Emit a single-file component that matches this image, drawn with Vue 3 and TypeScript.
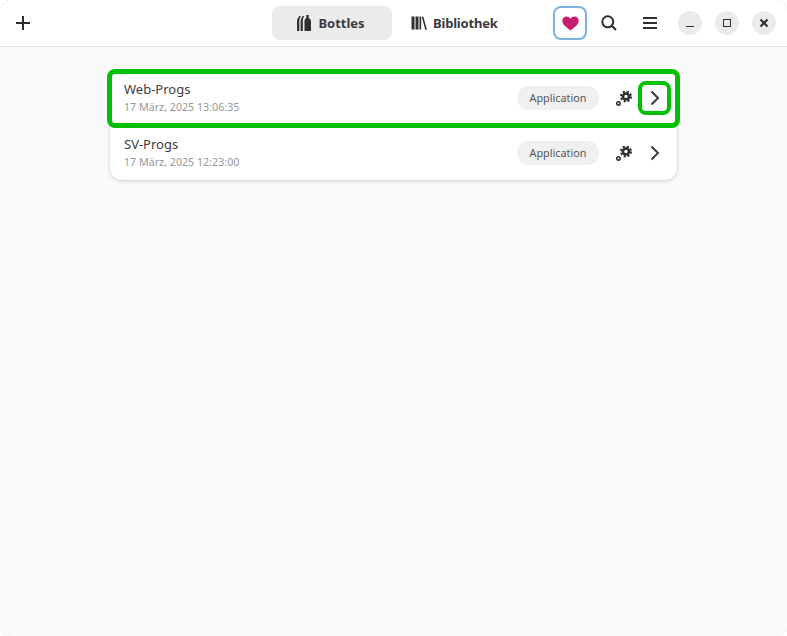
<script setup lang="ts">
interface Bottle {
  name: string;
  date: string;
  kind: string;
  marked: boolean;
}

const bottles: Bottle[] = [
  { name: 'Web-Progs', date: '17 März, 2025 13:06:35', kind: 'Application', marked: true },
  { name: 'SV-Progs', date: '17 März, 2025 12:23:00', kind: 'Application', marked: false },
];
</script>

<template>
  <div class="window">
    <header class="headerbar">
      <button class="icon-btn add" aria-label="Neu">
        <svg width="16" height="16" viewBox="0 0 16 16"><path d="M8 1v14M1 8h14" stroke="#2e2e33" stroke-width="2" fill="none" /></svg>
      </button>
      <nav class="tabs">
        <button class="tab active">
          <svg width="14" height="16" viewBox="0 0 14 16" fill="#2e2e33">
            <path d="M0 16V6.500C0 4 1.200 2.500 2.300 1h1.500C2.900 3 2.300 4.500 2.300 6.500V16z" />
            <path d="M3.600 16V6.500c0-2 1-3.800 2.200-5.500h1.300C6.200 3 5.800 4.500 5.800 6.500V16z" />
            <path d="M7.500 16V5.500c0-1 1-1.700 1.800-2.500V0h2.400v3c.8.800 2.300 1.500 2.300 2.500V16z" />
          </svg>
          <span>Bottles</span>
        </button>
        <button class="tab library">
          <svg width="16" height="14" viewBox="0 0 16 14" fill="#2e2e33">
            <path d="M0.500 0.500h3v13h-3zM4.500 0.500h3v13h-3zM8.500 0.500h1.700v13H8.500z" />
            <path d="M10.800 1l1.500-.5 3.600 13-1.500.5z" />
          </svg>
          <span>Bibliothek</span>
        </button>
      </nav>
      <div class="actions">
        <button class="icon-btn heart" aria-label="Spenden">
          <svg width="17" height="15" viewBox="0 0 17 15"><path d="M8.500 14.500C6 12.300.3 9.200.3 4.800.3 2.200 2.300.5 4.500.5c1.700 0 3.100.8 4 2.200.9-1.400 2.300-2.200 4-2.200 2.200 0 4.200 1.700 4.200 4.300 0 4.400-5.700 7.500-8.200 9.700z" fill="#c81e6e" /></svg>
        </button>
        <button class="icon-btn search" aria-label="Suchen">
          <svg width="16" height="16" viewBox="0 0 16 16" fill="none" stroke="#2e2e33" stroke-width="2"><circle cx="6.800" cy="6.800" r="5.500" /><path d="M10.800 10.800l4.200 4.200" /></svg>
        </button>
        <button class="icon-btn menu" aria-label="Menü">
          <svg width="16" height="14" viewBox="0 0 16 14" fill="#2e2e33"><path d="M1 1h14v2H1zM1 6h14v2H1zM1 11h14v2H1z" /></svg>
        </button>
        <div class="win-controls">
          <button class="win-btn" aria-label="Minimieren">
            <svg width="10" height="10" viewBox="0 0 10 10"><path d="M1 8.500h8" stroke="#2e2e33" stroke-width="1" /></svg>
          </button>
          <button class="win-btn" aria-label="Maximieren">
            <svg width="10" height="10" viewBox="0 0 10 10"><rect x="1.500" y="1.500" width="7" height="7" fill="none" stroke="#2e2e33" stroke-width="1" /></svg>
          </button>
          <button class="win-btn" aria-label="Schließen">
            <svg width="10" height="10" viewBox="0 0 10 10"><path d="M1.500 1.500l7 7M8.500 1.500l-7 7" stroke="#2e2e33" stroke-width="2" /></svg>
          </button>
        </div>
      </div>
    </header>

    <main class="content">
      <ul class="list">
        <li v-for="b in bottles" :key="b.name" class="row" :class="{ marked: b.marked }">
          <div class="labels">
            <span class="title">{{ b.name }}</span>
            <span class="date">{{ b.date }}</span>
          </div>
          <span class="pill">{{ b.kind }}</span>
          <button class="row-btn gear" aria-label="Ausführen">
            <svg width="16" height="15" viewBox="0 0 16 15">
              <g fill="none" stroke="#2e2e33">
                <circle cx="10" cy="5.500" r="3" stroke-width="2.600" />
                <circle cx="10" cy="5.500" r="5" stroke-width="2" stroke-dasharray="2.200 1.730" />
                <circle cx="2.400" cy="12.400" r="1.700" stroke-width="1.600" />
              </g>
            </svg>
          </button>
          <button class="row-btn chevron" :class="{ marked: b.marked }" aria-label="Öffnen">
            <svg width="10" height="16" viewBox="0 0 10 16"><path d="M1.500 1.500L8 8l-6.500 6.500" fill="none" stroke="#3a3a3f" stroke-width="2" /></svg>
          </button>
        </li>
      </ul>
    </main>
  </div>
</template>

<style>
html,
body {
  margin: 0;
  background: #ffffff;
}
</style>

<style scoped>
.window {
  width: 787px;
  height: 636px;
  display: flex;
  flex-direction: column;
  border-radius: 12px;
  overflow: hidden;
  background: #fafafb;
  box-shadow: 0 0 0 1px rgba(0, 0, 0, 0.06);
  font-family: 'Noto Sans', 'Open Sans', sans-serif;
  color: #2e2e33;
}
button {
  border: 0;
  padding: 0;
  background: none;
  font: inherit;
  color: inherit;
  display: flex;
  align-items: center;
  justify-content: center;
}
.headerbar {
  height: 46px;
  flex: none;
  display: flex;
  align-items: center;
  background: #ffffff;
  border-bottom: 1px solid #e2e2e2;
}
.add {
  margin-left: 15px;
  width: 16px;
  height: 16px;
}
.tabs {
  margin-left: 241px;
  display: flex;
}
.tab {
  width: 120px;
  height: 34px;
  gap: 7px;
  border-radius: 8px;
  font-size: 13px;
  font-weight: 700;
  color: #3a3a3f;
}
.tab.active {
  background: #ebebeb;
  padding-right: 2px;
  box-sizing: border-box;
}
.tab.library {
  justify-content: flex-start;
  padding-left: 19px;
  gap: 6px;
  box-sizing: border-box;
  letter-spacing: -0.2px;
}
.actions {
  margin-left: auto;
  display: flex;
  align-items: center;
}
.icon-btn.heart {
  width: 34px;
  height: 34px;
  box-sizing: border-box;
  border: 2px solid #7fb2e0;
  border-radius: 8px;
}
.icon-btn.search {
  width: 16px;
  height: 16px;
  margin-left: 14px;
}
.icon-btn.menu {
  width: 16px;
  height: 14px;
  margin-left: 25px;
}
.win-controls {
  display: flex;
  gap: 13px;
  margin-left: 20px;
  margin-right: 11px;
}
.win-btn {
  width: 24px;
  height: 24px;
  border-radius: 50%;
  background: #ebebeb;
}
.content {
  flex: 1;
  padding: 25px 110px 0;
}
.list {
  list-style: none;
  margin: 0;
  padding: 0;
  border-radius: 12px;
  background: #ffffff;
  box-shadow:
    0 0 0 1px rgba(0, 0, 0, 0.03),
    0 1px 4px rgba(0, 0, 0, 0.15);
}
.row {
  height: 55px;
  box-sizing: border-box;
  display: flex;
  align-items: center;
  padding: 1px 10px 0 14px;
  position: relative;
}
.row.marked {
  height: 53px;
  padding: 0 10px 1px 14px;
  background: #ffffff;
  outline: 5px solid #00c000;
  outline-offset: -2px;
  border-radius: 5px;
  z-index: 1;
}
.labels {
  display: flex;
  flex-direction: column;
  flex: 1;
  gap: 2px;
}
.title {
  font-size: 13px;
  line-height: 17px;
  color: #3d3d42;
}
.date {
  font-size: 10.700px;
  line-height: 15px;
  color: #97979b;
}
.pill {
  width: 82px;
  height: 24px;
  border-radius: 12px;
  background: #f0f0f0;
  font-size: 10.800px;
  line-height: 24px;
  text-align: center;
  color: #55555a;
}
.gear {
  margin-left: 17px;
  width: 16px;
  height: 15px;
}
.chevron {
  margin-left: 10px;
  width: 25px;
  height: 26px;
  border-radius: 4px;
}
.chevron.marked {
  outline: 4.500px solid #00c000;
  outline-offset: 0;
}
</style>
